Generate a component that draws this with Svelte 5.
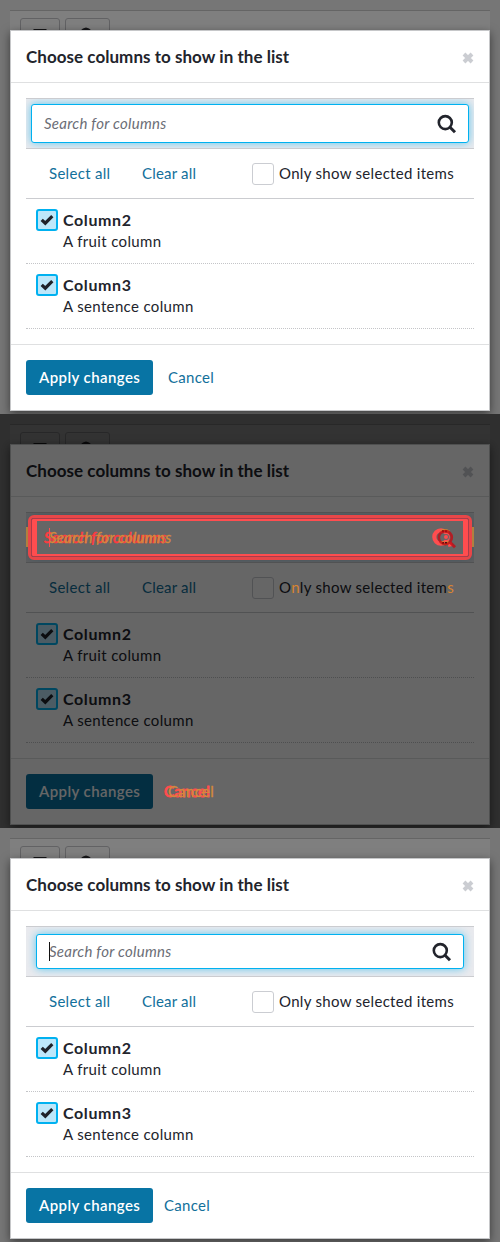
<script>
  const panels = [
    { kind: 'before' },
    { kind: 'diff' },
    { kind: 'after' }
  ];
  const columns = [
    { name: 'Column2', text: 'A fruit column' },
    { name: 'Column3', text: 'A sentence column' }
  ];
</script>

{#snippet magnifier()}
  <svg class="magnifier" width="20" height="20" viewBox="0 0 20 20">
    <circle cx="8.3" cy="8.6" r="6.5" fill="none" stroke="currentColor" stroke-width="2.6" />
    <path d="M13 13.2L18 18.2" stroke="currentColor" stroke-width="3" />
  </svg>
{/snippet}

{#each panels as panel}
  <section class="panel {panel.kind}">
    <div class="page">
      <div class="tool first"><svg width="14" height="3"><path d="M0.5 1h13v2H0.5z" fill="#151517" /></svg></div>
      <div class="tool second"><svg width="14" height="4"><path d="M1 4Q7 -3 13 4z" fill="#151517" /></svg></div>
    </div>
    <div class="modal">
      <header>
        <h1><span class="t-title">Choose columns to show in the list</span></h1>
        <svg class="close" width="12" height="12" viewBox="0 0 12 12">
          <path d="M2 2L10 10M10 2L2 10" stroke="#cbcdd2" stroke-width="3.9" />
        </svg>
      </header>
      <div class="body">
        <div class="search-strip">
          <div class="search">
            {#if panel.kind !== 'diff'}
              <span class="placeholder t-search">Search for columns</span>
              {@render magnifier()}
            {/if}
            {#if panel.kind === 'after'}<i class="caret"></i>{/if}
          </div>
        </div>
        <div class="actions">
          <a class="select"><span class="t-select">Select all</span></a>
          <a class="clear"><span class="t-clear">Clear all</span></a>
          <span class="box"></span>
          <span class="t-only">O<em>n</em>ly show selected item<em>s</em></span>
        </div>
        {#each columns as column}
          <div class="item">
            <span class="box checked">
              <svg width="14" height="12" viewBox="0 0 14 12"><path d="M1.7 5.8L5.3 9.2L12.3 2.2" fill="none" stroke="#1f222a" stroke-width="3.2" /></svg>
            </span>
            <div class="label">
              <b><span class="t-name">{column.name}</span></b>
              <p><span class="t-desc">{column.text}</span></p>
            </div>
          </div>
        {/each}
      </div>
      <footer>
        <button><span class="t-apply">Apply changes</span></button>
        {#if panel.kind !== 'diff'}
          <a class="cancel"><span class="t-cancel">Cancel</span></a>
        {/if}
      </footer>
    </div>
    {#if panel.kind === 'diff'}
      <div class="dim"></div>
      <div class="marks">
        <i class="edge left"></i>
        <i class="edge right"></i>
        <div class="frame"><div class="inner"></div></div>
        <span class="ghost search-red t-search">Search for columns</span>
        <span class="ghost search-orange t-search">Search for columns</span>
        <i class="red-caret"></i>
        <div class="ghost glass-old"><svg width="24" height="20" viewBox="0 0 24 20">
          <circle cx="9" cy="9" r="6.7" fill="none" stroke="#ff4d4f" stroke-width="4.2" />
          <path d="M16 17l4-1" stroke="#ff4d4f" stroke-width="4" />
          <path d="M9 3.2Q14 1.5 17 4M9 14Q13 17 17 14" fill="none" stroke="#d48a35" stroke-width="3" />
          <circle cx="14" cy="9" r="3" fill="#666" />
          <circle cx="14" cy="9" r="2" fill="#ff4d4f" />
          <path d="M10 3.2h5M10 15h5" stroke="#1c1512" stroke-width="2" stroke-dasharray="2 1" />
        </svg></div>
        <div class="ghost glass-new">{@render magnifier()}</div>
        <span class="ghost cancel-red t-cancel">Cancel</span>
        <span class="ghost cancel-orange t-cancel">Cancel</span>
      </div>
    {/if}
  </section>
{/each}

<style>
  .panel {
    position: relative;
    box-sizing: border-box;
    width: 500px;
    height: 414px;
    padding: 30px 10px 0;
    overflow: hidden;
    background: #767676;
    color: #22242c;
    font: 15px/22px Lato, sans-serif;
  }
  .panel * { box-sizing: border-box; }
  span { white-space: nowrap; }
  em { font-style: normal; }
  .page {
    display: flex;
    gap: 5px;
    height: 20px;
    margin-top: -20px;
    padding: 7px 10px 0;
    border-top: 1px solid #656565;
    background: #7f7f7f;
  }
  .tool {
    display: flex;
    justify-content: center;
    align-items: flex-end;
    width: 40px;
    height: 30px;
    padding-bottom: 16px;
    border: 1px solid #626264;
    border-radius: 3px;
  }
  .tool.second { width: 45px; padding-right: 3px; }
  .modal {
    position: relative;
    height: 381px;
    border: 1px solid #c6c7c9;
    background: #fff;
    box-shadow: 0 3px 9px rgba(0, 0, 0, .5);
  }
  header {
    display: flex;
    justify-content: space-between;
    align-items: center;
    height: 52px;
    padding: 0 15px;
    border-bottom: 1px solid #dfe0e1;
  }
  h1 { margin: 0; padding-bottom: 1px; font-size: 17px; line-height: 23px; font-weight: 700; }
  .close { margin-top: 2px; }
  .body { padding: 15px 15px 0; }
  .search-strip {
    height: 51px;
    padding: 5px;
    overflow: hidden;
    border: 1px solid #cbccd0;
    border-width: 1px 0;
    background: #e9eaee;
  }
  .search {
    position: relative;
    display: flex;
    align-items: center;
    justify-content: space-between;
    height: 39px;
    padding: 0 11px 0 12px;
    border: 1px solid #00b1f0;
    border-radius: 3px;
    background: #fff;
    box-shadow: 0 0 8px rgba(0, 177, 240, .6);
  }
  .after .search-strip { padding: 7px 10px; }
  .after .search { height: 35px; }
  .placeholder { padding-bottom: 1px; color: #6b6d76; font-style: italic; }
  .caret { position: absolute; left: 12px; top: 7px; width: 1px; height: 19px; background: #111; }
  .magnifier { display: block; color: #22242c; }
  .actions {
    display: flex;
    align-items: center;
    height: 50px;
    border-bottom: 1px solid #cbccd0;
  }
  .actions a, .actions .t-only { padding-bottom: 1px; }
  a { color: #12709b; }
  .select { width: 93px; margin-left: 23px; }
  .clear { width: 110px; }
  .box {
    display: block;
    flex: none;
    width: 22px;
    height: 22px;
    border: 1px solid #cbcdd2;
    border-radius: 3px;
  }
  .actions .box { margin-right: 5px; }
  .item {
    display: flex;
    height: 65px;
    padding: 10px 10px 0;
    border-bottom: 1px dotted #c4c5c8;
  }
  .checked {
    display: flex;
    align-items: center;
    justify-content: center;
    margin-right: 5px;
    border: 2px solid #00b1f0;
    background: #bee7fa;
  }
  .label b { display: block; font-size: 16px; line-height: 21px; }
  p { margin: 0; }
  footer {
    display: flex;
    align-items: center;
    height: 66px;
    margin-top: 15px;
    padding: 0 15px;
    border-top: 1px solid #dfe0e1;
  }
  button {
    display: flex;
    align-items: center;
    width: 127px;
    height: 35px;
    padding: 0 0 2px 13px;
    border: 0;
    border-radius: 3px;
    background: #0874a4;
    color: #fff;
    font: 600 15px/22px Lato, sans-serif;
  }
  .cancel { margin-left: 15px; padding-bottom: 2px; }
  .after .cancel { margin-left: 11px; }

  .t-title { letter-spacing: .04px; }
  .t-search { letter-spacing: .26px; }
  .t-select, .t-only { letter-spacing: .3px; }
  .t-clear { letter-spacing: .2px; }
  .t-name { letter-spacing: .6px; }
  .t-desc { letter-spacing: .35px; }
  .t-apply { letter-spacing: .42px; }
  .t-cancel { letter-spacing: .3px; }

  .dim { position: absolute; inset: 0; z-index: 1; background: rgba(0, 0, 0, .6); }
  .marks { position: absolute; inset: 0; z-index: 2; }
  .diff em { position: relative; z-index: 2; color: #d98430; }
  .frame {
    position: absolute;
    left: 28px;
    top: 101px;
    width: 444px;
    height: 45px;
    border: 3px solid #e84648;
    border-radius: 6px;
  }
  .inner {
    height: 39px;
    border: 1px solid #a83d4b;
    border-radius: 2px;
    box-shadow: inset 0 0 0 2px #ff4d4f, inset 5px 0 #ff4d4f, inset -5px 0 #ff4d4f;
    background: #666;
  }
  .edge { position: absolute; top: 113px; width: 2px; height: 20px; background: #b0803f; }
  .left { left: 26px; }
  .right { left: 472px; }
  .ghost { position: absolute; }
  .search-red { left: 44px; top: 112px; color: #ff3b40; font-style: italic; -webkit-text-stroke: .6px #ff3b40; }
  .search-orange { left: 49px; top: 112px; color: #d48a3c; font-style: italic; -webkit-text-stroke: .3px #d48a3c; }
  .red-caret { position: absolute; left: 49px; top: 114px; width: 1px; height: 19px; background: #ff4d4f; }
  .glass-old { left: 432px; top: 114px; }
  .glass-new { left: 437px; top: 115px; }
  .glass-new :global(svg) { color: #c60c14; opacity: .8; }
  .cancel-red { left: 164px; top: 366px; color: #ff4d4f; -webkit-text-stroke: 1px #ff4d4f; }
  .cancel-orange { left: 168px; top: 366px; color: #d48a3c; -webkit-text-stroke: .3px #d48a3c; }
</style>
